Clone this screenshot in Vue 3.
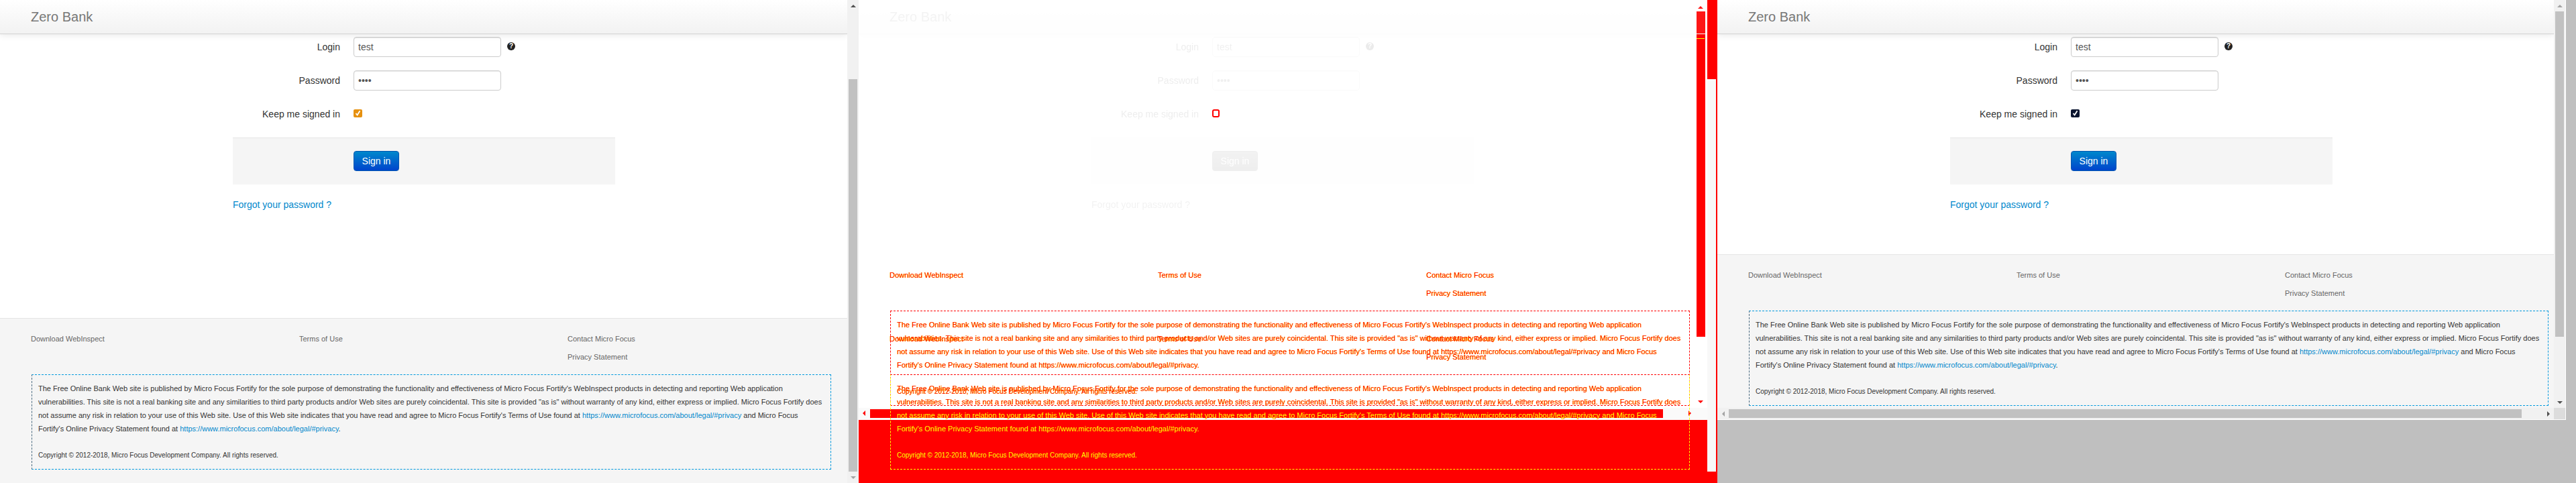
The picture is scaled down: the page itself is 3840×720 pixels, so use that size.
<template>
  <div class="shots">
    <div v-for="pane in panes" :key="pane.name" class="pane" :class="pane.name">
      <div class="frame">
        <div class="page">
          <header class="navbar"><span class="brand">Zero Bank</span></header>

          <main class="main">
            <form class="login" @submit.prevent>
              <div class="row">
                <label class="label">Login</label>
                <input class="field" type="text" value="test" readonly>
                <span class="help">?</span>
              </div>
              <div class="row">
                <label class="label">Password</label>
                <input class="field" type="password" value="test" readonly>
              </div>
              <div class="row">
                <label class="label">Keep me signed in</label>
                <span class="check"><svg viewBox="0 0 9 9" width="9" height="9"><path d="M1.5 5 L3.6 7.5 L7.5 1.2" fill="none" stroke="#fff" stroke-width="1.8" /></svg></span>
              </div>
              <div class="actions">
                <button class="signin" type="button">Sign in</button>
              </div>
              <a class="forgot" href="#">Forgot your password ?</a>
            </form>
          </main>

          <footer v-for="layer in pane.footers" :key="layer" class="footer" :class="layer">
            <div class="links">
              <a href="#">Download WebInspect</a>
              <a href="#">Terms of Use</a>
              <a href="#">Contact Micro Focus</a>
              <span></span>
              <span></span>
              <a href="#">Privacy Statement</a>
            </div>
            <div class="disclaimer">
              <div v-for="(line, i) in lines" :key="i" class="line" :class="{ hot: i > 1 }">
                <template v-for="(part, j) in line" :key="j">
                  <a v-if="part.url" href="#">{{ part.url }}</a>
                  <template v-else>{{ part }}</template>
                </template>
              </div>
              <div class="line copy hot">Copyright © 2012-2018, Micro Focus Development Company. All rights reserved.</div>
            </div>
          </footer>
        </div>

        <!-- normal scrollbars on the two screenshots -->
        <div v-if="pane.name !== 'diff'" class="vbar">
          <span class="btn"><i class="arrow up"></i></span>
          <div class="track"><div class="thumb"></div></div>
          <span class="btn"><i class="arrow down"></i></span>
        </div>
        <div v-if="pane.name === 'current'" class="hbar">
          <span class="btn"><i class="arrow left"></i></span>
          <div class="track"><div class="thumb"></div></div>
          <span class="btn"><i class="arrow right"></i></span>
        </div>
        <div v-if="pane.name === 'current'" class="corner"></div>
      </div>

      <!-- painted diff blocks, these sit on a free canvas -->
      <template v-if="pane.name === 'diff'">
        <div class="mark strip"></div>
        <div class="mark red-bottom"></div>
        <div class="mark red-hthumb"></div>
        <div class="mark red-vthumb"></div>
        <div class="mark tick-white"></div>
        <div class="mark tick-yellow"></div>
        <div class="mark red-old-thumb"></div>
        <div class="mark pale-old-track"></div>
        <div class="mark red-old-end"></div>
        <div class="mark red-edge"></div>
        <i class="mark tri tri-up"></i>
        <i class="mark tri tri-down"></i>
        <i class="mark tri tri-left"></i>
        <i class="mark tri tri-right"></i>
        <div class="mark diff-check"></div>
      </template>
    </div>
  </div>
</template>

<script setup>
const privacy = { url: 'https://www.microfocus.com/about/legal/#privacy' }

const panes = [
  { name: 'baseline', footers: ['normal'] },
  { name: 'diff', footers: ['layer-a', 'layer-b'] },
  { name: 'current', footers: ['normal'] },
]

// wrapped by hand so every pane breaks at the same words
const lines = [
  ["The Free Online Bank Web site is published by Micro Focus Fortify for the sole purpose of demonstrating the functionality and effectiveness of Micro Focus Fortify's WebInspect products in detecting and reporting Web application"],
  ['vulnerabilities. This site is not a real banking site and any similarities to third party products and/or Web sites are purely coincidental. This site is provided "as is" without warranty of any kind, either express or implied. Micro Focus Fortify does'],
  ["not assume any risk in relation to your use of this Web site. Use of this Web site indicates that you have read and agree to Micro Focus Fortify's Terms of Use found at ", privacy, ' and Micro Focus'],
  ["Fortify's Online Privacy Statement found at ", privacy, '.'],
]
</script>

<style>
html, body {
  margin: 0;
  background: #fff;
}
</style>

<style scoped>
.shots {
  display: flex;
  width: 3840px;
  height: 720px;
  overflow: hidden;
  font-family: "Liberation Sans", Arial, sans-serif;
  font-size: 14px;
  line-height: 20px;
  color: #333;
}

.pane {
  position: relative;
  flex: 0 0 1280px;
  height: 720px;
  overflow: hidden;
  background: #fff;
}

.frame {
  display: flex;
  height: 100%;
}

.page {
  flex: 0 0 1263px;
  height: 100%;
  overflow: hidden;
  background: #fff;
}

/* navbar */
.navbar {
  position: relative;
  z-index: 1;
  height: 50px;
  padding-left: 46px;
  line-height: 50px;
  background: linear-gradient(#fff, #f2f2f2);
  border-bottom: 1px solid #d4d4d4;
  box-shadow: 0 1px 10px rgba(0, 0, 0, 0.1);
}

.brand {
  font-size: 20px;
  color: #777;
}

/* login form */
.main {
  height: 423px;
  padding-top: 4px;
  box-sizing: border-box;
}

.login {
  width: 570px;
  margin-left: 347px;
}

.row {
  display: flex;
  align-items: center;
  height: 30px;
  margin-bottom: 20px;
}

.label {
  flex: 0 0 160px;
  margin-right: 20px;
  text-align: right;
}

.field {
  width: 220px;
  height: 30px;
  padding: 4px 6px;
  box-sizing: border-box;
  font-family: inherit;
  font-size: 14px;
  color: #555;
  background: #fff;
  border: 1px solid #ccc;
  border-radius: 4px;
  box-shadow: inset 0 1px 1px rgba(0, 0, 0, 0.075);
  outline: none;
}

.help {
  width: 12px;
  height: 12px;
  margin: -2px 0 0 9px;
  font-size: 10px;
  font-weight: 700;
  line-height: 12px;
  text-align: center;
  color: #fff;
  background: #222;
  border-radius: 50%;
}

.check {
  display: flex;
  align-items: center;
  justify-content: center;
  width: 13px;
  height: 12px;
  margin-top: -3px;
  border-radius: 2px;
}

.baseline .check {
  background: #e69110;
}

.current .check {
  background: #0b1530;
}

.actions {
  height: 70px;
  padding: 19px 0 0 180px;
  box-sizing: border-box;
  background: #f5f5f5;
  border-top: 1px solid #e5e5e5;
}

.signin {
  display: block;
  width: 68px;
  height: 30px;
  padding: 0;
  font-family: inherit;
  font-size: 14px;
  color: #fff;
  background: linear-gradient(#0088cc, #0044cc);
  border: 1px solid #0055b0;
  border-radius: 4px;
}

.forgot {
  display: block;
  margin-top: 20px;
  color: #0088cc;
  text-decoration: none;
}

/* footer */
.footer {
  height: 300px;
  padding-top: 20px;
  box-sizing: border-box;
  font-size: 11px;
  background: #f5f5f5;
  border-top: 1px solid #e5e5e5;
}

.links {
  display: grid;
  grid-template-columns: 400px 400px 400px;
  row-gap: 7px;
  padding-left: 46px;
}

.links a {
  color: #666;
  text-decoration: none;
}

.disclaimer {
  width: 1192px;
  margin: 16px 0 0 47px;
  padding: 10px 0;
  box-sizing: border-box;
  border: 1px dashed #0099dd;
  border-left-color: #4a6a80;
}

.line {
  padding-left: 9px;
  white-space: nowrap;
}

.line.copy {
  margin-top: 20px;
  font-size: 10px;
}

.line a {
  color: #0088cc;
  text-decoration: none;
}

/* scrollbars */
.vbar {
  display: flex;
  flex-direction: column;
  flex: 0 0 17px;
  background: #f1f1f1;
}

.btn {
  display: flex;
  flex: 0 0 17px;
  align-items: center;
  justify-content: center;
}

.vbar .track {
  flex: 1;
}

.vbar .thumb {
  width: 13px;
  margin: 0 2px;
  background: #c1c1c1;
}

.baseline .vbar .thumb {
  height: 585px;
  margin-top: 101px;
}

.arrow {
  width: 0;
  height: 0;
  border: 4px solid transparent;
}

.arrow.up {
  margin-top: -4px;
  border-bottom-color: #505050;
}

.arrow.down {
  margin-top: 4px;
  border-top-color: #a3a3a3;
}

.arrow.left {
  margin-left: -4px;
  border-right-color: #a3a3a3;
}

.arrow.right {
  margin-left: 4px;
  border-left-color: #505050;
}

/* the right shot sits smaller on a grey backdrop */
.current {
  background: #bfbfbf;
}

.current .frame {
  display: grid;
  grid-template-columns: 1247px 17px;
  grid-template-rows: 608px 17px;
  width: 1265px;
  height: 626px;
  background: #fff;
}

.current .page {
  height: 608px;
}

.current .main {
  height: 328px;
}

.current .vbar .thumb {
  height: 485px;
}

.current .arrow.up {
  border-bottom-color: #a3a3a3;
}

.current .arrow.down {
  border-top-color: #505050;
}

.hbar {
  display: flex;
  background: #f1f1f1;
}

.hbar .track {
  flex: 1;
}

.hbar .thumb {
  width: 1182px;
  height: 13px;
  margin-top: 2px;
  background: #c1c1c1;
}

.corner {
  background: #dcdcdc;
}

/* middle pane: a pixel diff of the two shots */
.diff .navbar,
.diff .main {
  filter: grayscale(1) opacity(0.09);
}

.diff .check {
  background: none;
}

.diff .check svg {
  display: none;
}

.footer.layer-a,
.footer.layer-b {
  position: absolute;
  z-index: 2;
  left: 0;
  width: 1263px;
  height: auto;
  color: #f00;
  text-shadow: 0.6px 0 0 #ff0;
  background: none;
  border-top-color: transparent;
}

.footer.layer-a {
  top: 379px;
}

.footer.layer-b {
  top: 474px;
}

.layer-a .links a,
.layer-b .links a,
.layer-a .line a,
.layer-b .line a {
  color: #f00;
}

.layer-a .disclaimer {
  border-color: #f00;
}

.layer-b .disclaimer {
  border-color: #f00 #ff0 #ff0;
}

.layer-b .line.hot,
.layer-b .line.hot a {
  color: #ff0;
  text-shadow: 0.6px 0 0 #f00;
}

.mark {
  position: absolute;
}

.strip {
  left: 0;
  top: 608px;
  width: 1265px;
  height: 18px;
  background: #fafafa;
}

.red-bottom {
  left: 0;
  top: 626px;
  width: 1265px;
  height: 94px;
  background: #f00;
}

.red-hthumb {
  left: 17px;
  top: 610px;
  width: 1182px;
  height: 13px;
  background: #f00;
}

.red-vthumb {
  left: 1249px;
  top: 17px;
  width: 13px;
  height: 485px;
  background: #f00;
}

.tick-white {
  left: 1247px;
  top: 50px;
  width: 16px;
  height: 1px;
  background: #fff;
}

.tick-yellow {
  left: 1249px;
  top: 57px;
  width: 12px;
  height: 1px;
  background: #ff0;
}

.red-old-thumb {
  left: 1265px;
  top: 0;
  width: 13px;
  height: 118px;
  background: #f00;
}

.pale-old-track {
  left: 1265px;
  top: 118px;
  width: 13px;
  height: 585px;
  background: #f8f8f8;
}

.red-old-end {
  left: 1265px;
  top: 703px;
  width: 15px;
  height: 17px;
  background: #f00;
}

.red-edge {
  left: 1278px;
  top: 0;
  width: 2px;
  height: 720px;
  background: #f00;
}

.tri {
  width: 0;
  height: 0;
  border: 4px solid transparent;
}

.tri-up {
  left: 1251px;
  top: 5px;
  border-bottom-color: #f00;
}

.tri-down {
  left: 1251px;
  top: 597px;
  border-top-color: #f00;
}

.tri-left {
  left: 2px;
  top: 612px;
  border-right-color: #f00;
}

.tri-right {
  left: 1237px;
  top: 612px;
  border-left-color: #f00;
}

.diff-check {
  left: 527px;
  top: 163px;
  width: 7px;
  height: 8px;
  border: 2px solid #f00;
  border-radius: 3px;
}
</style>
